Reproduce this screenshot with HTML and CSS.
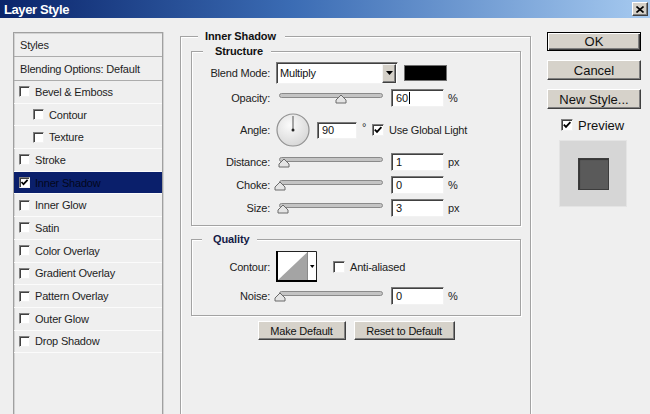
FILE: index.html
```html
<!DOCTYPE html>
<html>
<head>
<meta charset="utf-8">
<title>Layer Style</title>
<link rel="stylesheet" href="styles.css">
</head>
<body>
<div class="titlebar">
  <span class="title">Layer Style</span>
  <span class="close"><svg width="8" height="7" viewBox="0 0 8 7"><path d="M0.5 0.5 L7.5 6.5 M7.5 0.5 L0.5 6.5" stroke="#000" stroke-width="1.6" fill="none"/></svg></span>
</div>
<div class="main">
  <div class="stylelist">
    <div class="head">Styles</div>
    <div class="head">Blending Options: Default</div>
    <div class="item"><span class="cb"></span>Bevel &amp; Emboss</div>
    <div class="item sub"><span class="cb"></span>Contour</div>
    <div class="item sub"><span class="cb"></span>Texture</div>
    <div class="item"><span class="cb"></span>Stroke</div>
    <div class="item selected"><span class="cb"><svg viewBox="0 0 9 9" width="9" height="9"><path d="M1.5 4 L3.5 6.2 L7.6 1.8" stroke="#000" stroke-width="1.7" fill="none"/></svg></span>Inner Shadow</div>
    <div class="item"><span class="cb"></span>Inner Glow</div>
    <div class="item"><span class="cb"></span>Satin</div>
    <div class="item"><span class="cb"></span>Color Overlay</div>
    <div class="item"><span class="cb"></span>Gradient Overlay</div>
    <div class="item"><span class="cb"></span>Pattern Overlay</div>
    <div class="item"><span class="cb"></span>Outer Glow</div>
    <div class="item"><span class="cb"></span>Drop Shadow</div>
  </div>

  <div class="settings">
    <div class="group outer">
      <span class="legend lg-outer">Inner Shadow</span>
      <div class="group structure">
        <span class="legend lg-structure">Structure</span>
        <div class="row blend">
          <span class="lbl">Blend Mode:</span>
          <div class="select"><span class="sel-text">Multiply</span><span class="sel-btn"><svg width="7" height="4" viewBox="0 0 7 4"><path d="M0 0 L7 0 L3.5 4 Z" fill="#000"/></svg></span></div>
          <span class="swatch"></span>
        </div>
        <div class="row">
          <span class="lbl">Opacity:</span>
          <svg class="slider" width="112" height="12" viewBox="0 0 112 12"><rect x="5.5" y="1.5" width="103" height="4" rx="2" fill="#c4c4c4" stroke="#8a8a8a"/><path d="M67 3 L72 8 L72 11 L62 11 L62 8 Z" fill="#e4e4e4" stroke="#6a6a6a"/></svg>
          <span class="inp">60<span class="caret"></span></span>
          <span class="unit">%</span>
        </div>
        <div class="row angle">
          <span class="lbl">Angle:</span>
          <svg class="dial" width="36" height="34" viewBox="0 0 36 34"><defs><radialGradient id="dg" cx="40%" cy="35%" r="70%"><stop offset="0" stop-color="#fbfbfb"/><stop offset="1" stop-color="#d6d6d6"/></radialGradient></defs><circle cx="18" cy="17" r="16" fill="url(#dg)" stroke="#929292" stroke-width="1.2"/><line x1="18" y1="17" x2="18" y2="3" stroke="#555" stroke-width="1"/><circle cx="18" cy="17" r="1.5" fill="#222"/></svg>
          <span class="inp ang">90</span>
          <span class="deg">°</span>
          <span class="cb lgcb"><svg viewBox="0 0 10 10" width="10" height="10"><path d="M1.8 4.6 L4 6.9 L8.4 2.2" stroke="#000" stroke-width="1.8" fill="none"/></svg></span>
          <span class="cblabel">Use Global Light</span>
        </div>
        <div class="row r6">
          <span class="lbl">Distance:</span>
          <svg class="slider" width="112" height="12" viewBox="0 0 112 12"><rect x="5.5" y="1.5" width="103" height="4" rx="2" fill="#c4c4c4" stroke="#8a8a8a"/><path d="M10 3 L15 8 L15 11 L5 11 L5 8 Z" fill="#e4e4e4" stroke="#6a6a6a"/></svg>
          <span class="inp">1</span>
          <span class="unit">px</span>
        </div>
        <div class="row">
          <span class="lbl">Choke:</span>
          <svg class="slider" width="112" height="12" viewBox="0 0 112 12"><rect x="5.5" y="1.5" width="103" height="4" rx="2" fill="#c4c4c4" stroke="#8a8a8a"/><path d="M6 3 L11 8 L11 11 L1 11 L1 8 Z" fill="#e4e4e4" stroke="#6a6a6a"/></svg>
          <span class="inp">0</span>
          <span class="unit">%</span>
        </div>
        <div class="row">
          <span class="lbl">Size:</span>
          <svg class="slider" width="112" height="12" viewBox="0 0 112 12"><rect x="5.5" y="1.5" width="103" height="4" rx="2" fill="#c4c4c4" stroke="#8a8a8a"/><path d="M9 3 L14 8 L14 11 L4 11 L4 8 Z" fill="#e4e4e4" stroke="#6a6a6a"/></svg>
          <span class="inp">3</span>
          <span class="unit">px</span>
        </div>
      </div>

      <div class="group quality">
        <span class="legend lg-quality">Quality</span>
        <div class="row contour">
          <span class="lbl">Contour:</span>
          <svg class="contour-box" width="41" height="31" viewBox="0 0 41 31"><rect x="0" y="0" width="41" height="31" fill="#fff"/><polygon points="2,29 31,1.5 31,29" fill="#a4a4a4"/><line x1="31.5" y1="1" x2="31.5" y2="30" stroke="#8a8a8a"/><path d="M34 14 L38.5 14 L36.25 17 Z" fill="#000"/><path d="M1 0.5 H40.5 V30" stroke="#222" stroke-width="1" fill="none"/><path d="M1 0 V30 H41" stroke="#000" stroke-width="2" fill="none"/></svg>
          <span class="cb lgcb aa"></span>
          <span class="cblabel">Anti-aliased</span>
        </div>
        <div class="row">
          <span class="lbl">Noise:</span>
          <svg class="slider" width="112" height="12" viewBox="0 0 112 12"><rect x="5.5" y="1.5" width="103" height="4" rx="2" fill="#c4c4c4" stroke="#8a8a8a"/><path d="M6 3 L11 8 L11 11 L1 11 L1 8 Z" fill="#e4e4e4" stroke="#6a6a6a"/></svg>
          <span class="inp">0</span>
          <span class="unit">%</span>
        </div>
      </div>

      <div class="btnrow">
        <button class="btn b-make">Make Default</button>
        <button class="btn b-reset">Reset to Default</button>
      </div>
    </div>
  </div>

  <div class="actions">
    <button class="btn big default">OK</button>
    <button class="btn big">Cancel</button>
    <button class="btn big">New Style...</button>
    <div class="pv-row">
      <span class="cb lgcb"><svg viewBox="0 0 10 10" width="10" height="10"><path d="M1.8 4.6 L4 6.9 L8.4 2.2" stroke="#000" stroke-width="1.8" fill="none"/></svg></span>
      <span class="pv-label">Preview</span>
    </div>
    <div class="pv-box"><span class="pv-sq"></span></div>
  </div>
</div>
</body>
</html>
```

FILE: styles.css
```css
* { box-sizing: border-box; }
html, body { margin: 0; padding: 0; }
body {
  width: 650px;
  height: 414px;
  overflow: hidden;
  background: #efefef;
  font-family: "Liberation Sans", Arial, sans-serif;
  font-size: 11px;
  color: #1e1e1e;
  letter-spacing: -0.2px;
}

/* title bar */
.titlebar {
  height: 18px;
  display: flex;
  align-items: center;
  background: linear-gradient(to right, #0a246a 0%, #3b6cb4 45%, #a6caf0 100%);
}
.title {
  color: #fff;
  font-weight: bold;
  font-size: 13px;
  letter-spacing: -0.4px;
  padding-left: 4px;
}
.close {
  margin-left: auto;
  margin-right: 2px;
  width: 16px;
  height: 14px;
  background: #d4d0c8;
  border: 1px solid;
  border-color: #fff #404040 #404040 #fff;
  box-shadow: inset -1px -1px 0 #808080;
  display: flex;
  align-items: center;
  justify-content: center;
}
.close svg { display: block; }

.main {
  display: flex;
  align-items: flex-start;
}

/* left style list */
.stylelist {
  margin: 14px 0 0 13px;
  width: 150px;
  height: 384px;
  border: 1px solid #a0a0a0;
  border-bottom: 0;
  box-shadow: inset 1px 1px 0 #d2d2d2, 1px 0 0 #d2d2d2;
  flex: none;
}
.head {
  height: 24px;
  border-bottom: 1px solid #acacac;
  padding-left: 6px;
  display: flex;
  align-items: center;
}
.item {
  height: 22.7px;
  border-bottom: 1px solid #fbfbfb;
  padding-left: 5px;
  display: flex;
  align-items: center;
}
.item.sub { padding-left: 19px; }
.item.selected {
  background: #0a1f6b;
  color: #03071c;
}

.cb {
  width: 11px;
  height: 11px;
  flex: none;
  margin-right: 5px;
  background: #fff;
  border: 1px solid;
  border-color: #808080 #f2f2f2 #f2f2f2 #808080;
  box-shadow: inset 1px 1px 0 #404040;
  display: flex;
}
.cb svg { display: block; }
.lgcb { width: 12px; height: 12px; }

/* settings column */
.settings {
  margin: 18px 0 0 17px;
  width: 351px;
  flex: none;
}
.group {
  position: relative;
  border: 1px solid #a3a3a3;
  box-shadow: inset 1px 1px 0 #fff, 1px 1px 0 #fff;
}
.outer {
  height: 378px;
  border-bottom: 0;
  padding: 14px 9px 0 10px;
}
.structure { padding: 10px 0 8px 0; }
.quality { margin-top: 13px; padding: 11px 0 10px 0; }

.legend {
  position: absolute;
  top: -8px;
  height: 14px;
  line-height: 14px;
  background: #efefef;
  font-weight: bold;
  color: #111;
  letter-spacing: -0.1px;
}
.lg-outer { left: 17px; padding: 0 9px 0 7px; }
.lg-structure { left: 11px; padding: 0 8px 0 12px; }
.lg-quality { left: 10px; padding: 0 7px 0 11px; color: #141a46; }

.row {
  display: flex;
  align-items: center;
  height: 18px;
  margin-top: 5px;
}
.row.blend { height: 22px; margin-top: 0; }
.row.angle { height: 34px; margin-top: 6px; }
.row.r6 { margin-top: 6px; }
.row.contour { height: 31px; margin-top: 0; }

.lbl {
  width: 78px;
  flex: none;
  text-align: right;
  color: #222;
}

.select {
  margin-left: 6px;
  width: 122px;
  height: 22px;
  background: #fff;
  border: 1px solid;
  border-color: #7a7a7a #f2f2f2 #f2f2f2 #7a7a7a;
  box-shadow: inset 1px 1px 0 #404040;
  display: flex;
  align-items: center;
  padding: 1px 0 1px 3px;
}
.sel-text { flex: 1; color: #111; }
.sel-btn {
  width: 14px;
  height: 19px;
  margin-right: 1px;
  background: #d4d0c8;
  border: 1px solid;
  border-color: #f4f4f4 #404040 #404040 #f4f4f4;
  box-shadow: inset -1px -1px 0 #808080;
  display: flex;
  align-items: center;
  justify-content: center;
}
.sel-btn svg { display: block; }
.swatch {
  margin-left: 6px;
  width: 43px;
  height: 16px;
  background: #000;
  border: 1px solid #6e6e6e;
}

.slider { display: block; margin-left: 4px; flex: none; }
.dial { display: block; margin-left: 5px; flex: none; }
.contour-box { display: block; margin-left: 6px; flex: none; }

.inp {
  margin-left: 5px;
  width: 53px;
  height: 18px;
  flex: none;
  background: #fff;
  border: 1px solid;
  border-color: #7a7a7a #f2f2f2 #f2f2f2 #7a7a7a;
  box-shadow: inset 1px 1px 0 #404040;
  padding-left: 4px;
  display: flex;
  align-items: center;
  color: #111;
}
.inp.ang { margin-left: 6px; width: 40px; height: 17px; }
.caret {
  width: 1px;
  height: 12px;
  background: #000;
  margin-left: 1px;
}
.unit { margin-left: 4px; color: #222; }
.deg {
  width: 15px;
  flex: none;
  padding-left: 5px;
  align-self: flex-start;
  margin-top: 8px;
}
.cblabel { color: #222; }
.row .lgcb { margin-right: 5px; }
.row .aa { margin-left: 16px; }

.btnrow {
  display: flex;
  justify-content: center;
  gap: 8px;
  margin-top: 5px;
}

.btn {
  font: inherit;
  letter-spacing: inherit;
  color: #111;
  background: #d6d2ca;
  border: 1px solid;
  border-color: #fff #404040 #404040 #fff;
  box-shadow: inset -1px -1px 0 #808080;
  padding: 0;
  display: flex;
  align-items: center;
  justify-content: center;
  height: 19px;
}
.b-make { width: 88px; }
.b-reset { width: 101px; }

/* right actions */
.actions {
  margin: 14px 0 0 16px;
  width: 94px;
  flex: none;
  display: flex;
  flex-direction: column;
}
.btn.big {
  width: 94px;
  height: 20px;
  font-size: 13px;
  letter-spacing: 0;
  margin-top: 9px;
}
.btn.big.default {
  margin-top: 0;
  height: 19px;
  border: 1px solid #000;
  box-shadow: inset 1px 1px 0 #fff, inset -1px -1px 0 #404040, inset -2px -2px 0 #808080;
}
.pv-row {
  display: flex;
  align-items: center;
  margin: 10px 0 0 14px;
  height: 12px;
}
.pv-label { font-size: 13px; letter-spacing: 0; color: #111; }
.pv-box {
  margin: 9px 0 0 12px;
  width: 68px;
  height: 67px;
  background: #d6d6d6;
  border: 1px solid #e4e4e4;
  display: flex;
  align-items: center;
  justify-content: center;
}
.pv-sq {
  width: 31px;
  height: 32px;
  background: #5a5a5a;
  border: 1px solid #3c3c3c;
  box-shadow: inset 1px 1px 1px #333;
}
```
